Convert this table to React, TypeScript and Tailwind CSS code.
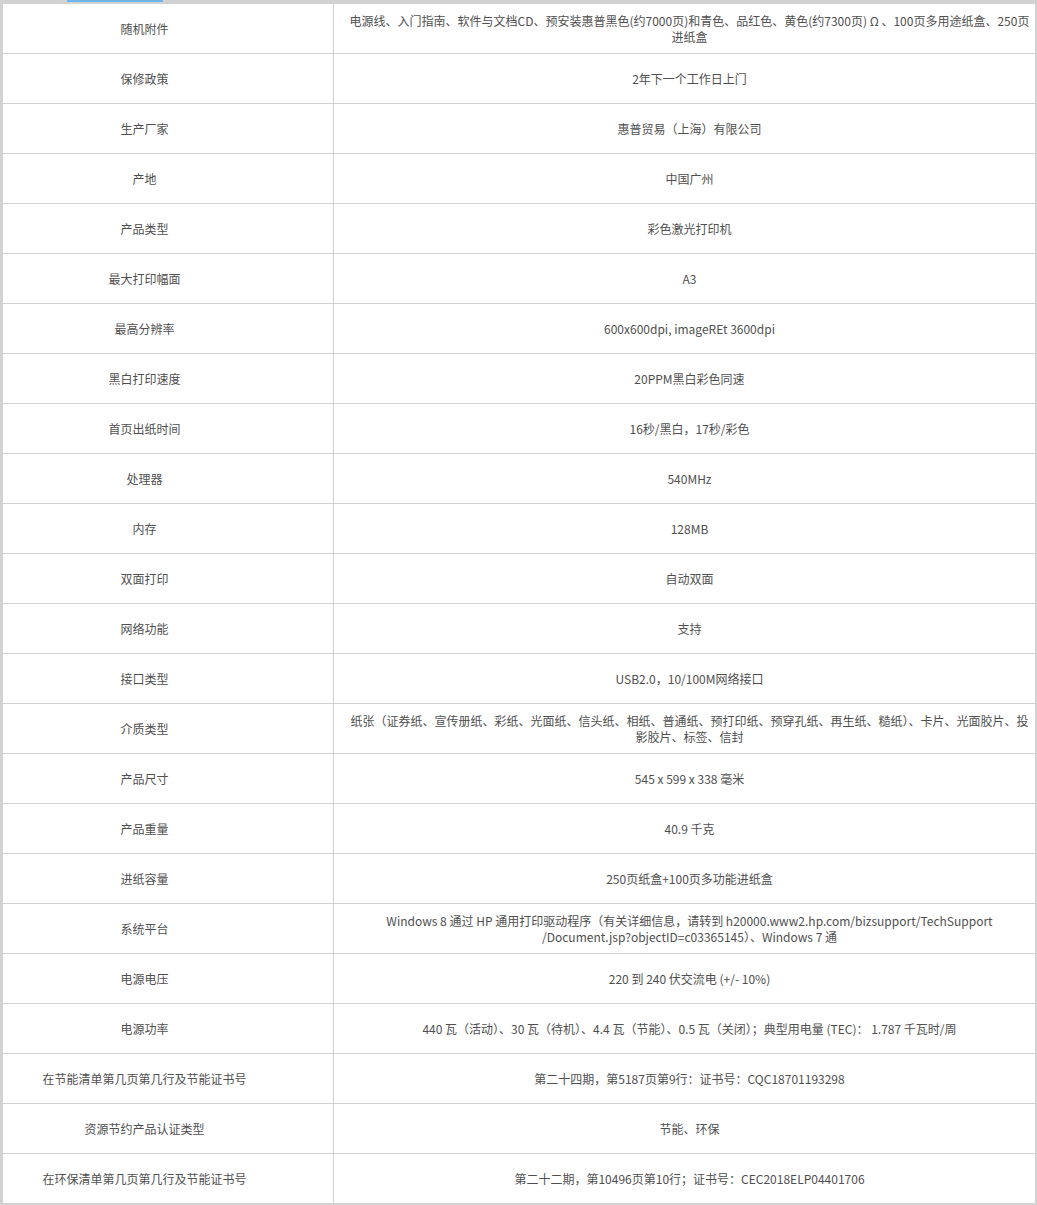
import React from 'react';

const rows: { label: string; value: React.ReactNode }[] = [
  {
    label: '随机附件',
    value: (
      <>
        电源线、入门指南、软件与文档CD、预安装惠普黑色(约7000页)和青色、品红色、黄色(约7300页) Ω 、100页多用途纸盒、250页
        <br />
        进纸盒
      </>
    ),
  },
  { label: '保修政策', value: '2年下一个工作日上门' },
  { label: '生产厂家', value: '惠普贸易（上海）有限公司' },
  { label: '产地', value: '中国广州' },
  { label: '产品类型', value: '彩色激光打印机' },
  { label: '最大打印幅面', value: 'A3' },
  { label: '最高分辨率', value: '600x600dpi, imageREt 3600dpi' },
  { label: '黑白打印速度', value: '20PPM黑白彩色同速' },
  { label: '首页出纸时间', value: '16秒/黑白，17秒/彩色' },
  { label: '处理器', value: '540MHz' },
  { label: '内存', value: '128MB' },
  { label: '双面打印', value: '自动双面' },
  { label: '网络功能', value: '支持' },
  { label: '接口类型', value: 'USB2.0，10/100M网络接口' },
  {
    label: '介质类型',
    value: (
      <>
        纸张（证券纸、宣传册纸、彩纸、光面纸、信头纸、相纸、普通纸、预打印纸、预穿孔纸、再生纸、糙纸）、卡片、光面胶片、投
        <br />
        影胶片、标签、信封
      </>
    ),
  },
  { label: '产品尺寸', value: '545 x 599 x 338 毫米' },
  { label: '产品重量', value: '40.9 千克' },
  { label: '进纸容量', value: '250页纸盒+100页多功能进纸盒' },
  {
    label: '系统平台',
    value: (
      <>
        Windows 8 通过 HP 通用打印驱动程序（有关详细信息，请转到 h20000.www2.hp.com/bizsupport/TechSupport
        <br />
        /Document.jsp?objectID=c03365145）、Windows 7 通
      </>
    ),
  },
  { label: '电源电压', value: '220 到 240 伏交流电 (+/- 10%)' },
  { label: '电源功率', value: '440 瓦（活动）、30 瓦（待机）、4.4 瓦（节能）、0.5 瓦（关闭）；典型用电量 (TEC)： 1.787 千瓦时/周' },
  { label: '在节能清单第几页第几行及节能证书号', value: '第二十四期，第5187页第9行：证书号：CQC18701193298' },
  { label: '资源节约产品认证类型', value: '节能、环保' },
  { label: '在环保清单第几页第几行及节能证书号', value: '第二十二期，第10496页第10行；证书号：CEC2018ELP04401706' },
];

export default function App() {
  return (
    <div
      className="relative w-[1037px] h-[1205px] bg-white overflow-hidden"
      style={{ fontFamily: '"Noto Sans CJK SC", "Liberation Sans", sans-serif' }}
    >
      <div className="absolute left-[67px] top-0 w-[96px] h-[2px] bg-[#6db6f0]" />
      <div className="h-full border-t-[4px] border-l-[3px] border-r-[2px] border-b-[2px] border-[#d2d2d2] flex flex-col">
        {rows.map((r, i) => (
          <div
            key={i}
            className={`flex h-[50px] shrink-0 ${i < rows.length - 1 ? 'border-b border-[#d0d0d0]' : ''}`}
          >
            <div className="w-[331px] shrink-0 border-r border-[#d0d0d0] pr-[47px] flex items-center justify-center text-[12px] leading-[16px] text-[#4f4f4f]">
              {r.label}
            </div>
            <div className="flex-1 pl-[10px] flex items-center justify-center text-center text-[12px] leading-[16px] text-[#4f4f4f] whitespace-nowrap">
              <div>{r.value}</div>
            </div>
          </div>
        ))}
      </div>
    </div>
  );
}
